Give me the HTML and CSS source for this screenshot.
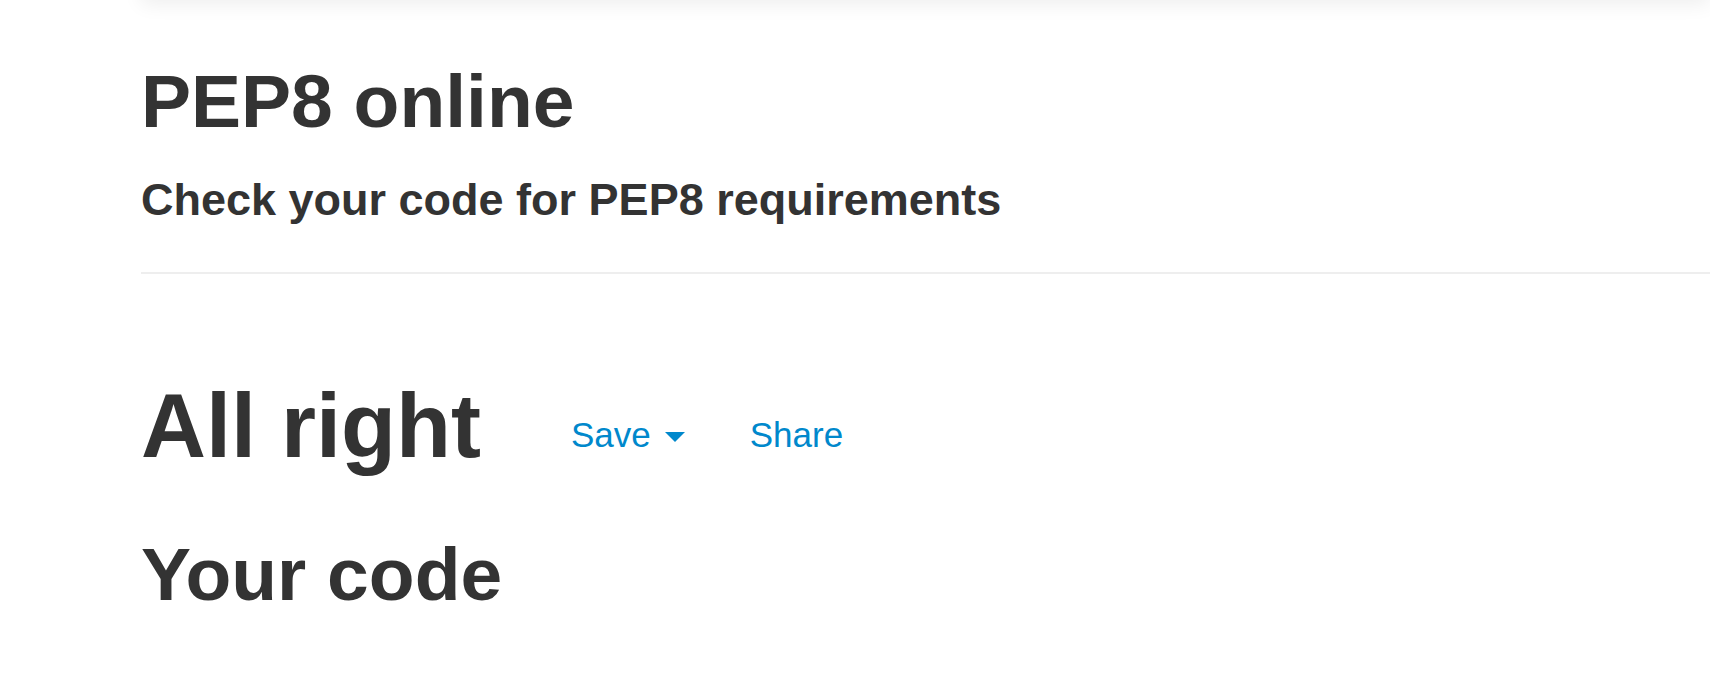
FILE: index.html
```html
<!DOCTYPE html>
<html>
<head>
<meta charset="utf-8">
<title>PEP8 online</title>
<link rel="stylesheet" href="styles.css">
</head>
<body>
<div class="navbar"></div>
<div class="container">
  <header class="page-header">
    <h1 class="title">PEP8 online</h1>
    <h2 class="subtitle">Check your code for PEP8 requirements</h2>
  </header>
  <section class="result">
    <div class="result-row">
      <h1 class="status">All right</h1>
      <div class="actions">
        <a class="action" href="#">Save <span class="caret"></span></a>
        <a class="action share" href="#">Share</a>
      </div>
    </div>
    <h1 class="code-title">Your code</h1>
  </section>
</div>
</body>
</html>
```
FILE: styles.css
```css
html, body {
  margin: 0;
  padding: 0;
  background: #fff;
  overflow: hidden;
}
body {
  font-family: "Liberation Sans", Arial, sans-serif;
  color: #333;
  width: 1710px;
  height: 693px;
}
.navbar {
  margin-left: 141px;
  height: 40px;
  margin-top: -40px;
  background: #fff;
  box-shadow: 0 4px 20px rgba(0, 0, 0, 0.07);
}
.container {
  margin-left: 141px;
}
.page-header {
  padding-top: 64px;
  padding-bottom: 50px;
  border-bottom: 2px solid #eee;
}
.title {
  margin: 0;
  font-size: 75px;
  line-height: 1;
  font-weight: bold;
}
.subtitle {
  margin: 38px 0 0;
  font-size: 45px;
  line-height: 1;
  font-weight: bold;
}
.result {
  padding-top: 107px;
}
.result-row {
  display: flex;
  align-items: flex-start;
}
.status {
  margin: 0;
  font-size: 90px;
  line-height: 1;
  font-weight: bold;
}
.actions {
  display: flex;
  gap: 65px;
  margin-left: 90px;
  margin-top: 36px;
}
.action {
  display: flex;
  align-items: center;
  gap: 14px;
  font-size: 35px;
  line-height: 1;
  color: #0088cc;
  text-decoration: none;
}
.caret {
  width: 0;
  height: 0;
  border-left: 10px solid transparent;
  border-right: 10px solid transparent;
  border-top: 10px solid #0088cc;
  margin-top: 4px;
}
.code-title {
  margin: 66px 0 0;
  font-size: 75px;
  line-height: 1;
  font-weight: bold;
}
```
